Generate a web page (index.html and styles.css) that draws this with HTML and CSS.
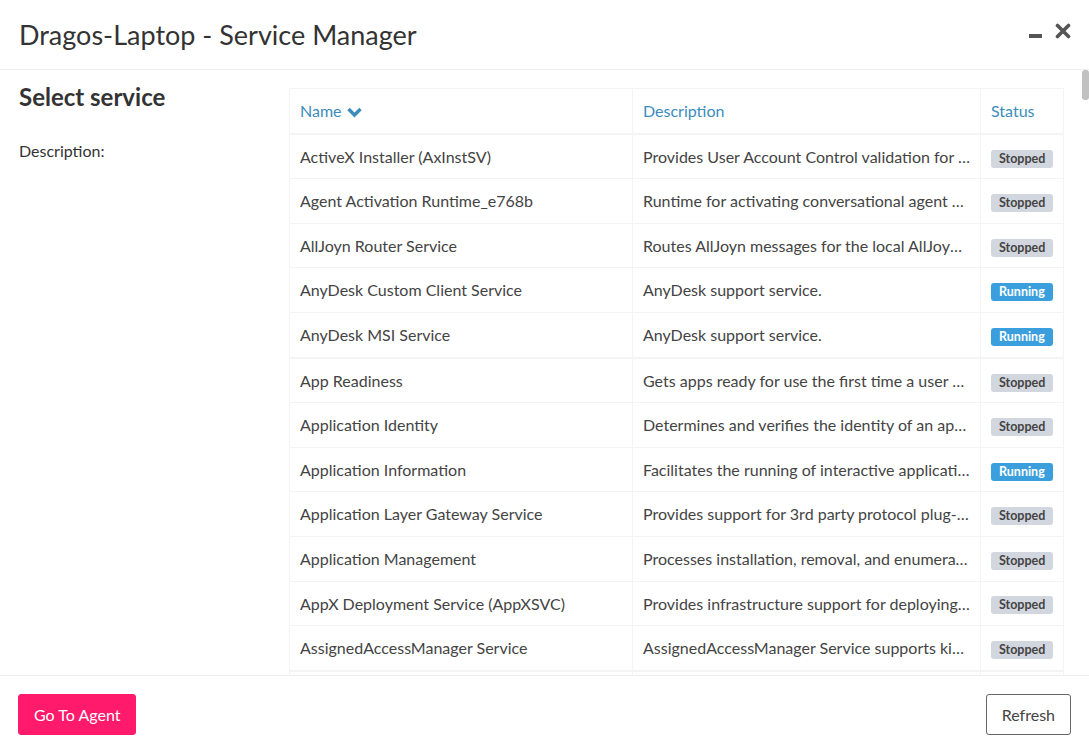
FILE: index.html
```html
<!DOCTYPE html>
<html lang="en">
<head>
    <meta charset="UTF-8">
    <title>Dragos-Laptop - Service Manager</title>
    <link rel="stylesheet" href="styles.css">
</head>
<body>
    <div class="modal">
        <div class="modal-header">
            <h1 class="modal-title">Dragos-Laptop - Service Manager</h1>
            <div class="window-tools">
                <svg class="tool-icon" width="14" height="16" viewBox="0 0 14 16"><rect x="0" y="11" width="13" height="4" fill="#555"/></svg>
                <svg class="tool-icon" width="16" height="16" viewBox="0 0 16 16"><path d="M2.5 2.5 L13.5 13.5 M13.5 2.5 L2.5 13.5" stroke="#555" stroke-width="3.6" stroke-linecap="round"/></svg>
            </div>
        </div>

        <div class="modal-body">
            <div class="content">
                <div class="side">
                    <h2>Select service</h2>
                    <p>Description:</p>
                </div>

                <table class="services">
                    <colgroup>
                        <col class="col-name">
                        <col class="col-desc">
                        <col class="col-status">
                    </colgroup>
                    <thead>
                        <tr>
                            <th>Name <svg class="sort" width="17" height="12" viewBox="0 0 17 12"><path d="M2.5 3 L8.5 9 L14.5 3" fill="none" stroke="#3c8dbc" stroke-width="3.4" stroke-linejoin="miter"/></svg></th>
                            <th>Description</th>
                            <th>Status</th>
                        </tr>
                    </thead>
                    <tbody>
                        <tr>
                            <td>ActiveX Installer (AxInstSV)</td>
                            <td>Provides User Account Control validation for the installation of ActiveX controls from the Internet</td>
                            <td><span class="label stopped">Stopped</span></td>
                        </tr>
                        <tr>
                            <td>Agent Activation Runtime_e768b</td>
                            <td>Runtime for activating conversational agent applications</td>
                            <td><span class="label stopped">Stopped</span></td>
                        </tr>
                        <tr>
                            <td>AllJoyn Router Service</td>
                            <td>Routes AllJoyn messages for the local AllJoyn clients</td>
                            <td><span class="label stopped">Stopped</span></td>
                        </tr>
                        <tr>
                            <td>AnyDesk Custom Client Service</td>
                            <td>AnyDesk support service.</td>
                            <td><span class="label running">Running</span></td>
                        </tr>
                        <tr>
                            <td>AnyDesk MSI Service</td>
                            <td>AnyDesk support service.</td>
                            <td><span class="label running">Running</span></td>
                        </tr>
                    </tbody>
                    <tbody>
                        <tr>
                            <td>App Readiness</td>
                            <td>Gets apps ready for use the first time a user signs in to this PC and when adding new apps.</td>
                            <td><span class="label stopped">Stopped</span></td>
                        </tr>
                        <tr>
                            <td>Application Identity</td>
                            <td>Determines and verifies the identity of an application.</td>
                            <td><span class="label stopped">Stopped</span></td>
                        </tr>
                        <tr>
                            <td>Application Information</td>
                            <td>Facilitates the running of interactive applications with additional administrative privileges.</td>
                            <td><span class="label running">Running</span></td>
                        </tr>
                        <tr>
                            <td>Application Layer Gateway Service</td>
                            <td>Provides support for 3rd party protocol plug-ins for Internet Connection Sharing</td>
                            <td><span class="label stopped">Stopped</span></td>
                        </tr>
                        <tr>
                            <td>Application Management</td>
                            <td>Processes installation, removal, and enumeration requests for software deployed through Group Policy.</td>
                            <td><span class="label stopped">Stopped</span></td>
                        </tr>
                        <tr>
                            <td>AppX Deployment Service (AppXSVC)</td>
                            <td>Provides infrastructure support for deploying Store applications.</td>
                            <td><span class="label stopped">Stopped</span></td>
                        </tr>
                        <tr>
                            <td>AssignedAccessManager Service</td>
                            <td>AssignedAccessManager Service supports kiosk experience in Windows.</td>
                            <td><span class="label stopped">Stopped</span></td>
                        </tr>
                    </tbody>
                    <tbody>
                        <tr>
                            <td>AVCTP service</td>
                            <td>This is Audio Video Control Transport Protocol service</td>
                            <td><span class="label running">Running</span></td>
                        </tr>
                    </tbody>
                </table>
            </div>
            <div class="scrollbar"><div class="thumb"></div></div>
        </div>

        <div class="modal-footer">
            <button class="btn btn-agent">Go To Agent</button>
            <button class="btn btn-refresh">Refresh</button>
        </div>
    </div>
</body>
</html>
```

FILE: styles.css
```css
html, body {
    margin: 0;
    padding: 0;
    background: #fff;
}
body {
    font-family: Lato, "Open Sans", sans-serif;
    font-size: 16px;
    color: #333;
}
.modal {
    height: 753px;
    display: flex;
    flex-direction: column;
}
.modal-header {
    height: 69px;
    border-bottom: 1px solid #eee;
    display: flex;
    align-items: center;
    justify-content: space-between;
    padding: 0 18px 0 19px;
    flex-shrink: 0;
}
.modal-title {
    margin: 0;
    font-size: 27px;
    font-weight: 400;
    color: #333;
}
.window-tools {
    display: flex;
    gap: 12px;
    align-items: center;
    margin-bottom: 8px;
}
.tool-icon {
    display: block;
}
.modal-body {
    flex: 1;
    display: flex;
    overflow: hidden;
}
.content {
    flex: 1;
    display: flex;
    padding: 18px 19px 0 19px;
    overflow: hidden;
}
.side {
    width: 270px;
    flex-shrink: 0;
}
.side h2 {
    margin: 0;
    font-size: 24px;
    font-weight: 700;
    line-height: 18px;
}
.side p {
    margin: 35px 0 0;
}
.scrollbar {
    width: 7px;
    flex-shrink: 0;
}
.thumb {
    height: 30px;
    background: #c1c1c1;
    border-radius: 3px;
}
table.services {
    width: 774px;
    flex-shrink: 0;
    table-layout: fixed;
    border-collapse: collapse;
    border: 1px solid #f4f4f4;
    align-self: flex-start;
}
.col-name {
    width: 343px;
}
.col-desc {
    width: 348px;
}
.col-status {
    width: 83px;
}
.services th,
.services td {
    border: 1px solid #f4f4f4;
    padding: 10px 10px;
    line-height: 23.6px;
    text-align: left;
    white-space: nowrap;
    overflow: hidden;
    text-overflow: ellipsis;
}
.services th {
    font-weight: 400;
    color: #3c8dbc;
    border-bottom-width: 2px;
}
.services tbody + tbody {
    border-top: 2px solid #f4f4f4;
}
.services td {
    color: #444;
}
.services td:last-child {
    padding-right: 6px;
    text-overflow: clip;
}
.sort {
    vertical-align: -1px;
}
.label {
    display: inline-block;
    font-size: 12.5px;
    font-weight: 700;
    line-height: 18px;
    padding: 0 8px;
    border-radius: 3px;
    vertical-align: middle;
}
.stopped {
    background: #d2d6de;
    color: #444;
}
.running {
    background: #3c9fdd;
    color: #fff;
}
.modal-footer {
    border-top: 1px solid #eee;
    height: 78px;
    flex-shrink: 0;
    display: flex;
    align-items: flex-start;
    justify-content: space-between;
    padding: 18px 18px 0 18px;
    box-sizing: border-box;
}
.btn {
    font-family: inherit;
    font-size: 16px;
    height: 41px;
    border-radius: 3px;
    padding: 0 15px;
    cursor: pointer;
}
.btn-agent {
    background: #ff1a6c;
    color: #fff;
    border: 1px solid #ff1a6c;
}
.btn-refresh {
    background: #fff;
    color: #444;
    border: 1px solid #666;
}
```
